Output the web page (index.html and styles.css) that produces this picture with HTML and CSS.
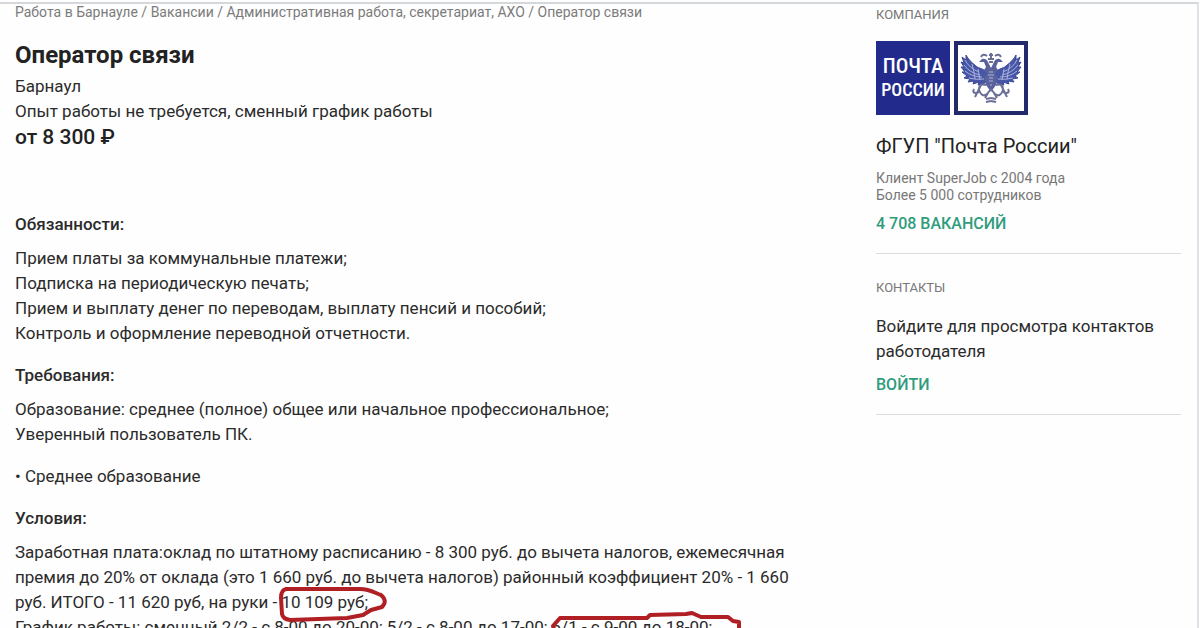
FILE: index.html
```html
<!DOCTYPE html>
<html lang="ru">
<head>
<meta charset="utf-8">
<meta name="viewport" content="width=device-width, initial-scale=1">
<title>Оператор связи</title>
<link rel="stylesheet" href="styles.css">
</head>
<body>
<div class="page">
  <main class="vacancy">
    <nav class="crumbs" aria-label="Навигация"><a href="#">Работа в Барнауле</a> / <a href="#">Вакансии</a> / <a href="#">Административная работа, секретариат, АХО</a> / <a href="#">Оператор связи</a></nav>
    <h1 class="title">Оператор связи</h1>
    <p class="text">Барнаул</p>
    <p class="text">Опыт работы не требуется, сменный график работы</p>
    <p class="salary">от 8 300 ₽</p>

    <section class="block block-first">
      <h2 class="subtitle">Обязанности:</h2>
      <p class="text">Прием платы за коммунальные платежи;<br>Подписка на периодическую печать;<br>Прием и выплату денег по переводам, выплату пенсий и пособий;<br>Контроль и оформление переводной отчетности.</p>
    </section>
    <section class="block">
      <h2 class="subtitle">Требования:</h2>
      <p class="text">Образование: среднее (полное) общее или начальное профессиональное;<br>Уверенный пользователь ПК.</p>
    </section>
    <section class="block">
      <p class="text">• Среднее образование</p>
    </section>
    <section class="block">
      <h2 class="subtitle">Условия:</h2>
      <p class="text">Заработная плата:оклад по штатному расписанию - 8 300 руб. до вычета налогов, ежемесячная<br>премия до 20% от оклада (это 1 660 руб. до вычета налогов) районный коэффициент 20% - 1 660<br>руб. ИТОГО - 11 620 руб, на руки - <span class="marked">10 109 руб;<svg class="ring ring-pay" viewBox="0 0 112 38" aria-hidden="true"><path d="M7 3 L82 3 C92 3 97 7 103 9 Q110 15 104 21 L93 24 L85 29 L69 32 L12 34 Q5 33 4 28 L3 12 Q3 4 8 3"/></svg></span><br>График работы: сменный 2/2 - с 8-00 до 20-00; 5/2 - с 8-00 до 17-00; <span class="marked">6/1 - с 9-00 до 18-00;<svg class="ring ring-time" viewBox="0 0 192 38" aria-hidden="true"><path d="M3 15 L10 7 L97 7 L100 4 L136 3 L142 2 L151 6 L178 6 L183 10 L189 11 L189 30 L170 35 L9 35 Z"/></svg></span></p>
    </section>
  </main>

  <aside class="side">
    <section class="card">
      <h2 class="label">КОМПАНИЯ</h2>
      <div class="logo">
        <div class="logo-name"><span class="logo-top">ПОЧТА</span><span>РОССИИ</span></div>
        <div class="logo-mark">
          <svg class="eagle" viewBox="0 0 62 62" aria-hidden="true">
            <g id="half">
              <path class="wing" d="M28 28 C25 21 19 22 16 19 C11 15 8 12 6 8 L6 13 L2 10 L4 16 L1 15 L4 20 L1 20 L5 25 L2 25 L7 29 L4 31 L10 32 L8 35 L14 34 L13 37 L19 35 L18 38 L25 36 Z"/>
              <path class="feather" d="M5 13 Q9 21 19 25 M4 18 Q10 26 20 28 M5 24 Q12 30 22 30 M9 31 Q16 33 24 32 M12 17 Q14 24 15 32 M18 22 L20 33"/>
              <path class="body" d="M31 21 L28 15 Q26 11 22 12 L19 15 L24 15 L26 20 L24 23 L27 27 L24 31 L26 38 L31 45 Z"/>
              <path class="line" d="M26 38 Q19 36 19 42 Q20 46 16 46 Q12 46 14 42 M19 43 Q22 51 27 47 L31 42 M21 38 L15 50 M28 46 L25 51 M21 10 Q23 6 27 9 M26 52 L31 51 M26 55 L31 54"/>
            </g>
            <use href="#half" transform="matrix(-1 0 0 1 62 0)"/>
            <path class="line" d="M31 6 V12 M29 8 H33 M28 12 H34 M29 15 H33"/>
            <path class="feather" d="M29 25 H33 M28 28 H34 M29 31 H33 M29 34 H33 M30 38 H32"/>
          </svg>
        </div>
      </div>
      <h3 class="company">ФГУП "Почта России"</h3>
      <p class="meta">Клиент SuperJob с 2004 года<br>Более 5 000 сотрудников</p>
      <a class="action" href="#">4 708 ВАКАНСИЙ</a>
    </section>
    <section class="card card-contacts">
      <h2 class="label">КОНТАКТЫ</h2>
      <p class="text contact-text">Войдите для просмотра контактов работодателя</p>
      <a class="action" href="#">ВОЙТИ</a>
    </section>
  </aside>
</div>
</body>
</html>
```

FILE: styles.css
```css
* { box-sizing: border-box; }

body {
  margin: 0;
  height: 100vh;
  overflow: hidden;
  background: #fefefe;
  color: #2b2b2b;
  font-family: Roboto, "Liberation Sans", sans-serif;
  font-size: 17px;
  line-height: 25px;
}

h1, h2, h3, p { margin: 0; }
a { color: inherit; text-decoration: none; }

.page {
  display: grid;
  grid-template-columns: minmax(0, 1fr) 321px;
  min-height: 100vh;
  margin-right: 1px;
  border-top: 2px solid #d5d8da;
  border-right: 2px solid #dfe2e6;
  margin-top: 2px;
}

.vacancy { padding-left: 15px; white-space: nowrap; }

.crumbs {
  font-size: 14px;
  line-height: 17px;
  color: #7b7b7b;
}

.title {
  margin: 19px 0 4px;
  font-size: 24px;
  line-height: 30px;
  font-weight: 700;
  color: #222;
}

.salary { font-size: 21px; line-height: 27px; font-weight: 500; color: #222; }

.block { margin-top: 17px; }
.block-first { margin-top: 61px; }

.subtitle {
  margin-bottom: 9px;
  font-size: 17px;
  line-height: 25px;
  font-weight: 500;
}

.marked { position: relative; }

.ring {
  position: absolute;
  overflow: visible;
  fill: none;
  stroke: #b01f24;
  stroke-width: 4;
  stroke-linejoin: round;
}

.ring-pay { left: -3px; top: -6px; width: 112px; height: 38px; }
.ring-time { left: -2px; top: -6px; width: 192px; height: 38px; }

.side { padding-right: 16px; }

.card {
  padding-bottom: 17px;
  border-bottom: 1px solid #dadde0;
}

.card-contacts { padding-top: 23px; }

.label {
  font-size: 13px;
  line-height: 21px;
  font-weight: 400;
  color: #777;
}

.logo {
  display: flex;
  gap: 4px;
  margin: 16px 0 17px;
}

.logo-name, .logo-mark {
  display: flex;
  width: 74px;
  height: 74px;
}

.logo-name {
  flex-direction: column;
  align-items: center;
  justify-content: center;
  background: #222b8b;
  color: #fff;
  font-family: "Roboto Condensed", "Liberation Sans Narrow", Roboto, sans-serif;
  font-size: 18px;
  line-height: 23px;
  font-weight: 500;
}

.logo-top { font-size: 21px; }

.logo-mark {
  align-items: center;
  justify-content: center;
  border: 4px solid #222a6b;
  background: #fff;
}

.eagle { width: 62px; height: 62px; }
.wing { fill: #4856a6; stroke: #3a4899; stroke-width: 1; }
.body { fill: #59629b; }
.feather { fill: none; stroke: #aab2df; stroke-width: 1; }
.line { fill: none; stroke: #6a7096; stroke-width: 2; }

.company {
  font-size: 20px;
  line-height: 28px;
  font-weight: 400;
  color: #222;
}

.meta {
  margin: 10px 0 7px;
  font-size: 14px;
  line-height: 17px;
  color: #777;
}

.action {
  display: block;
  font-size: 16px;
  line-height: 25px;
  font-weight: 500;
  color: #2f9c7d;
}

.contact-text { margin: 16px 0 8px; }
```
